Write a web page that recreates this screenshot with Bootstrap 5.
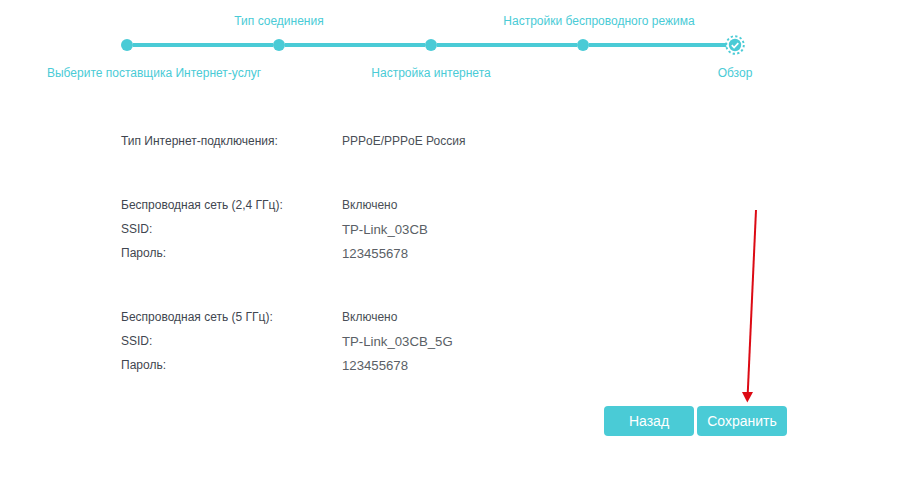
<!DOCTYPE html>
<html lang="ru">
<head>
    <meta charset="UTF-8">
    <meta name="viewport" content="width=device-width, initial-scale=1.0">
    <title>Быстрая настройка - Обзор</title>
    <link href="https://cdn.jsdelivr.net/npm/bootstrap@5.3.3/dist/css/bootstrap.min.css" rel="stylesheet">
    <style>
        body { background: #fff; font-family: "Liberation Sans", Arial, sans-serif; font-size: 12px; color: #333; position: relative; height: 487px; overflow: hidden; }
        .wizard { width: 760px; margin-left: 51px; padding-top: 14px; }
        .wizard-row { display: grid; grid-template-columns: repeat(5, 152px); }
        .wizard-text { height: 14px; line-height: 14px; color: #4acbd6; white-space: nowrap; display: flex; justify-content: center; }
        .shift-first { padding-left: 54px; }
        .shift-fourth { padding-left: 32px; }
        .wizard-track { height: 24px; margin: 5px 0 9px; align-items: center; }
        .wizard-line { flex: 1; height: 4px; background: #4acbd6; }
        .wizard-line.blank { background: transparent; }
        .wizard-dot { width: 12px; height: 12px; border-radius: 50%; background: #4acbd6; flex: none; }
        .wizard-now { width: 20px; height: 20px; flex: none; margin: 0 -4px; position: relative; }
        .summary { margin: 49px 0 0 121px; }
        .summary-group { margin-bottom: 40px; }
        .summary-row { height: 24px; line-height: 24px; }
        .summary-key { width: 221px; color: #3f4650; }
        .summary-val { color: #4a4f57; }
        .summary-val.big { font-size: 13.2px; line-height: 26px; color: #5a5f66; }
        .actions { width: 787px; gap: 3px; margin-top: -11px; }
        .btn-wizard { width: 90px; height: 30px; padding: 0; border: 0; border-radius: 4px; background: #4acbd6; color: #fff; font-size: 14px; }
        .red-arrow { position: absolute; left: 735px; top: 205px; }
    </style>
</head>
<body>

<div class="wizard">
    <div class="wizard-row">
        <div></div>
        <div class="wizard-text">Тип соединения</div>
        <div></div>
        <div class="wizard-text shift-fourth">Настройки беспроводного режима</div>
        <div></div>
    </div>
    <div class="wizard-row wizard-track">
        <div class="d-flex align-items-center"><span class="wizard-line blank"></span><span class="wizard-dot"></span><span class="wizard-line"></span></div>
        <div class="d-flex align-items-center"><span class="wizard-line"></span><span class="wizard-dot"></span><span class="wizard-line"></span></div>
        <div class="d-flex align-items-center"><span class="wizard-line"></span><span class="wizard-dot"></span><span class="wizard-line"></span></div>
        <div class="d-flex align-items-center"><span class="wizard-line"></span><span class="wizard-dot"></span><span class="wizard-line"></span></div>
        <div class="d-flex align-items-center">
            <span class="wizard-line"></span>
            <svg class="wizard-now" viewBox="0 0 20 20">
                <circle cx="10" cy="10" r="8.8" fill="#fff" stroke="#4acbd6" stroke-width="1.9" stroke-dasharray="2.3 2.3"/>
                <circle cx="10" cy="10" r="6.2" fill="#4acbd6"/>
                <path d="M6.8 10.2l2.3 2.3 4.2-4.4" fill="none" stroke="#fff" stroke-width="1.7"/>
            </svg>
            <span class="wizard-line blank"></span>
        </div>
    </div>
    <div class="wizard-row">
        <div class="wizard-text shift-first">Выберите поставщика Интернет-услуг</div>
        <div></div>
        <div class="wizard-text">Настройка интернета</div>
        <div></div>
        <div class="wizard-text">Обзор</div>
    </div>
</div>

<div class="summary">
    <div class="summary-group">
        <div class="d-flex summary-row"><div class="summary-key">Тип Интернет-подключения:</div><div class="summary-val">PPPoE/PPPoE Россия</div></div>
    </div>
    <div class="summary-group">
        <div class="d-flex summary-row"><div class="summary-key">Беспроводная сеть (2,4 ГГц):</div><div class="summary-val">Включено</div></div>
        <div class="d-flex summary-row"><div class="summary-key">SSID:</div><div class="summary-val big">TP-Link_03CB</div></div>
        <div class="d-flex summary-row"><div class="summary-key">Пароль:</div><div class="summary-val big">123455678</div></div>
    </div>
    <div class="summary-group">
        <div class="d-flex summary-row"><div class="summary-key">Беспроводная сеть (5 ГГц):</div><div class="summary-val">Включено</div></div>
        <div class="d-flex summary-row"><div class="summary-key">SSID:</div><div class="summary-val big">TP-Link_03CB_5G</div></div>
        <div class="d-flex summary-row"><div class="summary-key">Пароль:</div><div class="summary-val big">123455678</div></div>
    </div>
</div>

<div class="d-flex justify-content-end actions">
    <button type="button" class="btn btn-wizard">Назад</button>
    <button type="button" class="btn btn-wizard">Сохранить</button>
</div>

<svg class="red-arrow" width="30" height="200" viewBox="0 0 30 200">
    <path d="M21 5L12.800 187" stroke="#dc0a14" stroke-width="2" fill="none"/>
    <path d="M7 187L18 187L12.300 197.500Z" fill="#dc0a14"/>
</svg>

<script src="https://cdn.jsdelivr.net/npm/bootstrap@5.3.3/dist/js/bootstrap.bundle.min.js"></script>
</body>
</html>
